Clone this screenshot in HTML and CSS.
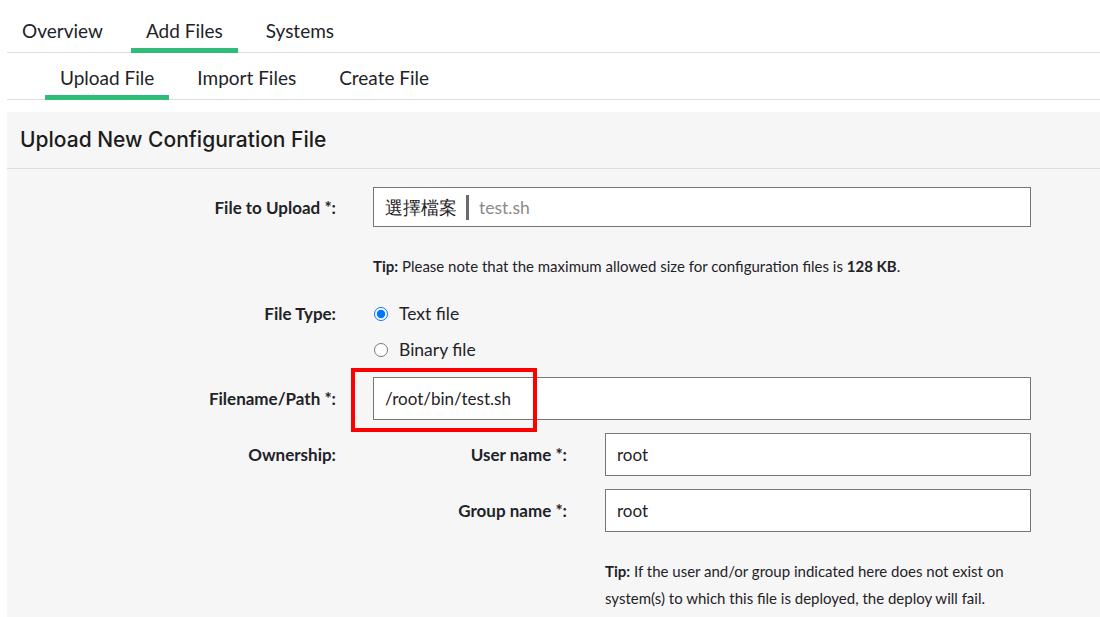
FILE: index.html
```html
<!DOCTYPE html>
<html lang="en">
<head>
  <meta charset="UTF-8" />
  <meta name="viewport" content="width=device-width, initial-scale=1.0"/>
  <title>Add Files - Upload File</title>
  <link rel="stylesheet" href="styles.css">
</head>
<body>

  <nav class="tabs">
    <a class="tab">Overview</a>
    <a class="tab active">Add Files</a>
    <a class="tab">Systems</a>
  </nav>

  <nav class="tabs subtabs">
    <a class="tab active">Upload File</a>
    <a class="tab">Import Files</a>
    <a class="tab">Create File</a>
  </nav>

  <section class="panel">
    <h2 class="panel-title">Upload New Configuration File</h2>

    <form class="panel-body">
      <div class="row">
        <label class="label">File to Upload *:</label>
        <div class="field file-field">
          <span class="file-btn">選擇檔案</span>
          <span class="file-name">test.sh</span>
        </div>
      </div>

      <div class="row tip-row">
        <span></span>
        <p class="tip"><b>Tip:</b> Please note that the maximum allowed size for configuration files is <b>128 KB</b>.</p>
      </div>

      <div class="row radio-row">
        <label class="label">File Type:</label>
        <div class="radios">
          <label class="radio"><input type="radio" name="type" checked> Text file</label>
          <label class="radio"><input type="radio" name="type"> Binary file</label>
        </div>
      </div>

      <div class="row path-row">
        <label class="label">Filename/Path *:</label>
        <div class="highlight-wrap">
          <input class="field" type="text" value="/root/bin/test.sh">
          <span class="highlight"></span>
        </div>
      </div>

      <div class="row owner-row">
        <label class="label">Ownership:</label>
        <div class="owner">
          <div class="owner-line">
            <label class="label">User name *:</label>
            <input class="field" type="text" value="root">
          </div>
          <div class="owner-line">
            <label class="label">Group name *:</label>
            <input class="field" type="text" value="root">
          </div>
          <div class="owner-line">
            <span></span>
            <p class="tip tip-wrap"><b>Tip:</b> <span>If the user and/or group indicated here does not exist on</span> <span>system(s) to which this file is deployed, the deploy will fail.</span></p>
          </div>
        </div>
      </div>
    </form>
  </section>

</body>
</html>
```

FILE: styles.css
```css
body {
  margin: 0;
  padding: 0 0 0 7px;
  font-family: Lato, 'Noto Sans CJK TC', sans-serif;
  color: #1f2328;
  background: #fff;
}

/* Tabs */
.tabs {
  display: flex;
  gap: 13px;
  height: 52px;
  border-bottom: 1px solid #dedede;
}

.tab {
  box-sizing: border-box;
  height: 53px;
  padding: 20px 15px 6px;
  font-size: 19px;
  line-height: 22px;
  border-bottom: 5px solid transparent;
  cursor: pointer;
}

.tab.active {
  border-bottom-color: #2fbb78;
}

.subtabs {
  height: 46px;
  padding-left: 38px;
}

.subtabs .tab {
  height: 47px;
  padding-top: 14px;
}

/* Panel */
.panel {
  margin-top: 12px;
  background: #f6f6f6;
  height: 505px;
}

.panel-title {
  margin: 0;
  height: 56px;
  padding: 0 13px;
  font-family: Inter, sans-serif;
  font-weight: 500;
  font-size: 21px;
  line-height: 56px;
  color: #1c1c1c;
  border-bottom: 1px solid #dedede;
}

.panel-body {
  padding-top: 18px;
}

.row {
  display: grid;
  grid-template-columns: 329px 658px;
  column-gap: 37px;
  align-items: center;
}

.label {
  text-align: right;
  font-weight: 700;
  font-size: 17px;
}

.field {
  box-sizing: border-box;
  height: 43px;
  width: 100%;
  margin: 0;
  padding: 0 11px;
  border: 1px solid #767676;
  background: #fff;
  font-family: Lato, sans-serif;
  font-size: 17px;
  color: #1f2328;
  outline: none;
}

.file-field {
  display: flex;
  align-items: center;
  height: 40px;
}

.file-btn {
  font-size: 17.5px;
  padding-right: 9px;
  border-right: 3px solid #6b6b6b;
  line-height: 25px;
}

.file-name {
  padding-left: 10px;
  font-size: 17.5px;
  color: #8a8a8a;
}

/* Tips */
.tip {
  margin: 0;
  font-size: 15px;
  line-height: 20px;
}

.tip-row {
  margin-top: 29px;
}

.tip-wrap {
  margin-top: 13px;
  line-height: 27px;
}

/* Radio buttons */
.radio-row {
  margin-top: 26px;
  align-items: start;
}

.radio-row .label {
  line-height: 24px;
}

.radios {
  display: flex;
  flex-direction: column;
  gap: 12px;
}

.radio {
  display: flex;
  align-items: center;
  gap: 11px;
  font-size: 17.5px;
  line-height: 24px;
}

.radio input {
  width: 14px;
  height: 14px;
  margin: 0 0 0 1px;
}

.path-row {
  margin-top: 15px;
}

.highlight-wrap {
  position: relative;
}

/* red box drawn around the path value */
.highlight {
  position: absolute;
  left: -22px;
  top: -9px;
  width: 186px;
  height: 64px;
  box-sizing: border-box;
  border: 4px solid #ff0000;
  pointer-events: none;
}

/* Ownership */
.owner-row {
  margin-top: 13px;
  align-items: start;
}

.owner-row > .label {
  line-height: 43px;
}

.owner {
  display: flex;
  flex-direction: column;
  gap: 13px;
}

.owner-line {
  display: grid;
  grid-template-columns: 194px 426px;
  column-gap: 38px;
  align-items: center;
}
```
